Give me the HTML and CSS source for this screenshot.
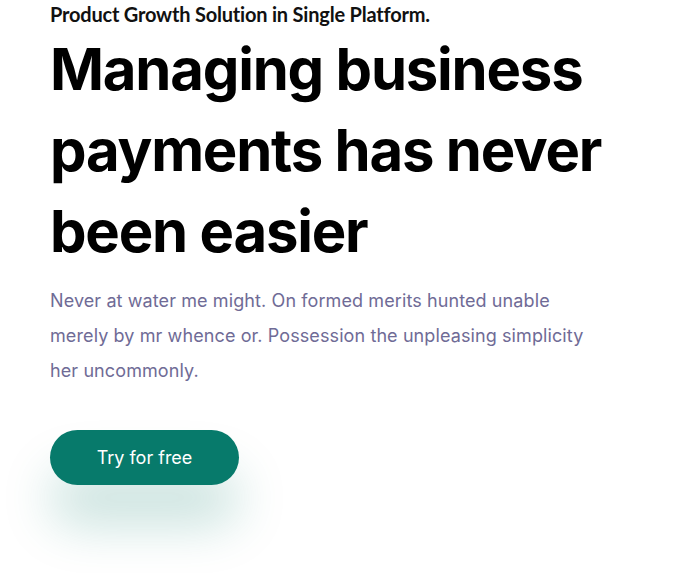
FILE: index.html
```html
<!DOCTYPE html>
<html lang="en">
<head>
<meta charset="utf-8">
<title>Hero</title>
<link rel="stylesheet" href="styles.css">
</head>
<body>
<section class="hero">
  <p class="eyebrow">Product Growth Solution in Single Platform.</p>
  <h1 class="title">Managing business payments has never been easier</h1>
  <p class="lead">Never at water me might. On formed merits hunted unable merely by mr whence or. Possession the unpleasing simplicity her uncommonly.</p>
  <div class="actions">
    <a class="btn" href="#">Try for free</a>
  </div>
</section>
</body>
</html>
```

FILE: styles.css
```css
html, body {
  margin: 0;
  padding: 0;
  background: #ffffff;
}
.hero {
  padding: 0 0 90px 50px;
  width: 600px;
}
.eyebrow {
  margin: 0;
  padding-top: 2px;
  font-family: "Lato", sans-serif;
  font-weight: 700;
  font-size: 20px;
  line-height: 24px;
  letter-spacing: -0.2px;
  color: #111111;
}
.title {
  margin: 3px 0 0;
  width: 580px;
  font-family: "Inter", sans-serif;
  font-weight: 700;
  font-size: 58px;
  line-height: 81px;
  letter-spacing: -1.2px;
  color: #000000;
}
.lead {
  margin: 11px 0 0;
  width: 545px;
  font-family: "Inter", sans-serif;
  font-weight: 400;
  font-size: 18px;
  line-height: 35px;
  letter-spacing: 0.1px;
  color: #6f6b96;
}
.actions {
  margin-top: 42px;
}
.btn {
  display: inline-flex;
  align-items: center;
  justify-content: center;
  width: 189px;
  height: 55px;
  border-radius: 28px;
  background: #077a6b;
  color: #ffffff;
  font-family: "Inter", sans-serif;
  font-size: 18px;
  font-weight: 400;
  text-decoration: none;
  box-shadow: 0 40px 50px rgba(7, 122, 107, 0.22);
}
```
